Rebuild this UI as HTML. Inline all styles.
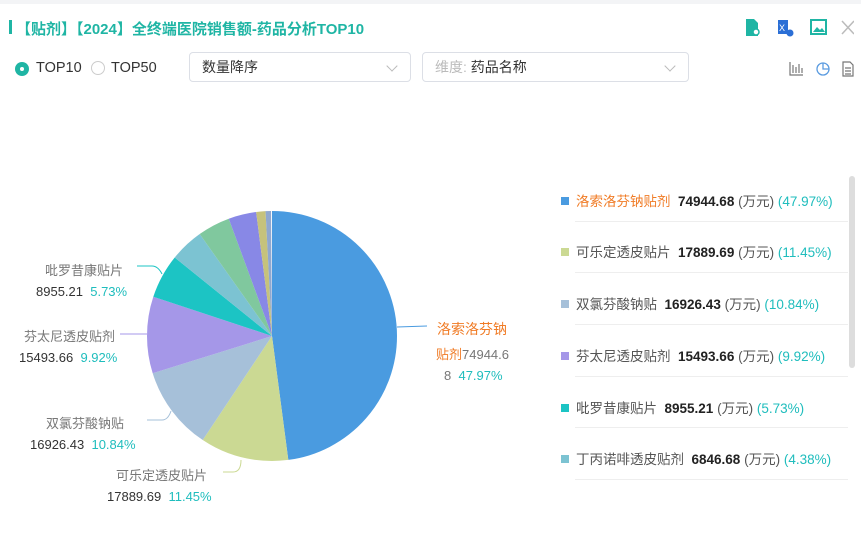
<!DOCTYPE html>
<html><head><meta charset="utf-8"><style>
body{margin:0;width:861px;height:540px;background:#fff;font-family:"Liberation Sans","Noto Sans CJK SC",sans-serif;position:relative;overflow:hidden}
.a{position:absolute;white-space:nowrap}
.topbar{position:absolute;left:0;top:0;width:861px;height:4px;background:#f3f4f6}
.title{left:16px;top:18px;font-size:15px;font-weight:bold;color:#1fb5a4}
.bar{position:absolute;left:9px;top:20px;width:3px;height:14px;background:#1fb5a4}
.sel{position:absolute;top:52px;height:30px;border:1px solid #dcdfe6;border-radius:4px;box-sizing:border-box;font-size:14px;color:#333;line-height:28px;padding-left:12px}
.chev{position:absolute;right:14px;top:9px;width:7px;height:7px;border-right:1px solid #bbb;border-bottom:1px solid #bbb;transform:rotate(45deg)}
.lab{font-size:13px;color:#777}
.num{color:#333}
.pc{color:#1fbdbd}
.lg{position:absolute;left:561px;font-size:13.5px;color:#555}
.lg b{color:#222}
.sq{display:inline-block;width:8px;height:8px;margin-right:7px;vertical-align:1px}
.hr{position:absolute;left:575px;width:273px;height:1px;background:#eee}
</style></head><body>
<div class="topbar"></div>
<div class="bar"></div>
<div class="a title">【贴剂】【2024】全终端医院销售额-药品分析TOP10</div>
<svg class="a" style="left:744px;top:18px" width="110" height="20">
<path d="M2 1h8l4 4v13H2z" fill="#1fb5a4"/><circle cx="12" cy="14" r="3" fill="#fff" stroke="#1fb5a4" stroke-width="1.5"/>
<rect x="34" y="2" width="10" height="14" fill="#2b6fd6"/><text x="35" y="13" font-size="9" fill="#fff" font-family="Liberation Sans">X</text><circle cx="46" cy="15" r="3.5" fill="#2b6fd6"/>
<rect x="67" y="2" width="15" height="14" fill="none" stroke="#1fb5a4" stroke-width="2"/><path d="M69 14l4-5 3 3 2-2 3 4z" fill="#1fb5a4"/>
<path d="M98 3l12 13M110 3L98 16" stroke="#bbb" stroke-width="1.5"/>
</svg>
<div class="a" style="left:15px;top:62px;width:14px;height:14px;border-radius:50%;background:#1fb5a4"></div>
<div class="a" style="left:20px;top:67px;width:4px;height:4px;border-radius:50%;background:#fff"></div>
<div class="a" style="left:36px;top:60px;font-size:14.5px;color:#333">TOP10</div>
<div class="a" style="left:91px;top:61px;width:14px;height:14px;border-radius:50%;border:1px solid #ccc;box-sizing:border-box"></div>
<div class="a" style="left:111px;top:60px;font-size:14.5px;color:#333">TOP50</div>
<div class="sel" style="left:189px;width:222px">数量降序<div class="chev"></div></div>
<div class="sel" style="left:422px;width:267px"><span style="color:#bbb">维度:</span> 药品名称<div class="chev"></div></div>
<svg class="a" style="left:789px;top:61px" width="68" height="16">
<path d="M1 1v13h13M4 12V4M7 12V6M10 12V3M13 12V7" stroke="#777" fill="none" stroke-width="1.2"/>
<circle cx="34" cy="8" r="6" fill="none" stroke="#5a9be0" stroke-width="1.3"/><path d="M34 2v6h6" stroke="#5a9be0" fill="none" stroke-width="1.3"/>
<path d="M54 1h7l3 3v11H54z M56 7h6M56 10h6M56 13h6" stroke="#777" fill="none" stroke-width="1.2"/>
</svg>
<svg class="a" style="left:0;top:0" width="540" height="540">
<g transform="rotate(-90 272 336)" fill="none" stroke-width="125">
<circle cx="272" cy="336" r="62.5" pathLength="100" stroke="#4a9be0" stroke-dasharray="47.97 100" stroke-dashoffset="0"/>
<circle cx="272" cy="336" r="62.5" pathLength="100" stroke="#cbd993" stroke-dasharray="11.45 100" stroke-dashoffset="-47.97"/>
<circle cx="272" cy="336" r="62.5" pathLength="100" stroke="#a6c0d9" stroke-dasharray="10.84 100" stroke-dashoffset="-59.42"/>
<circle cx="272" cy="336" r="62.5" pathLength="100" stroke="#a597e8" stroke-dasharray="9.92 100" stroke-dashoffset="-70.26"/>
<circle cx="272" cy="336" r="62.5" pathLength="100" stroke="#1cc4c4" stroke-dasharray="5.73 100" stroke-dashoffset="-80.18"/>
<circle cx="272" cy="336" r="62.5" pathLength="100" stroke="#7cc3d2" stroke-dasharray="4.38 100" stroke-dashoffset="-85.91"/>
<circle cx="272" cy="336" r="62.5" pathLength="100" stroke="#80c89e" stroke-dasharray="4.2 100" stroke-dashoffset="-90.29"/>
<circle cx="272" cy="336" r="62.5" pathLength="100" stroke="#8888e6" stroke-dasharray="3.6 100" stroke-dashoffset="-94.49"/>
<circle cx="272" cy="336" r="62.5" pathLength="100" stroke="#c6c27c" stroke-dasharray="1.2 100" stroke-dashoffset="-98.09"/>
<circle cx="272" cy="336" r="62.5" pathLength="100" stroke="#8fa8d0" stroke-dasharray="0.71 100" stroke-dashoffset="-99.29"/>
</g>
<path d="M397 327l30-1" stroke="#4a9be0" fill="none"/>
<path d="M137 266h15q6 0 10 8" stroke="#1cc4c4" fill="none"/>
<path d="M120 334h27" stroke="#a597e8" fill="none"/>
<path d="M147 420h15q6 0 9-9" stroke="#a6c0d9" fill="none"/>
<path d="M223 472h10q8 0 8-12" stroke="#cbd993" fill="none"/>
</svg>
<div class="a lab" style="left:45px;top:260px">吡罗昔康贴片</div>
<div class="a lab" style="left:36px;top:284px"><span class="num">8955.21</span>&nbsp; <span class="pc">5.73%</span></div>
<div class="a lab" style="left:24px;top:326px">芬太尼透皮贴剂</div>
<div class="a lab" style="left:19px;top:350px"><span class="num">15493.66</span>&nbsp; <span class="pc">9.92%</span></div>
<div class="a lab" style="left:46px;top:413px">双氯芬酸钠贴</div>
<div class="a lab" style="left:30px;top:437px"><span class="num">16926.43</span>&nbsp; <span class="pc">10.84%</span></div>
<div class="a lab" style="left:116px;top:465px">可乐定透皮贴片</div>
<div class="a lab" style="left:107px;top:489px"><span class="num">17889.69</span>&nbsp; <span class="pc">11.45%</span></div>
<div class="a lab" style="left:437px;top:319px;color:#f07b25;font-size:14px">洛索洛芬钠</div>
<div class="a lab" style="left:436px;top:344px"><span style="color:#f07b25">贴剂</span>74944.6</div>
<div class="a lab" style="left:444px;top:368px">8&nbsp; <span class="pc">47.97%</span></div>
<div class="lg" style="top:190px"><span class="sq" style="background:#4a9be0"></span><span style="color:#f07b25">洛索洛芬钠贴剂</span>&nbsp; <b>74944.68</b> (万元) <span class="pc">(47.97%)</span></div>
<div class="hr" style="top:221px"></div>
<div class="lg" style="top:241px"><span class="sq" style="background:#cbd993"></span>可乐定透皮贴片&nbsp; <b>17889.69</b> (万元) <span class="pc">(11.45%)</span></div>
<div class="hr" style="top:272px"></div>
<div class="lg" style="top:293px"><span class="sq" style="background:#a6c0d9"></span>双氯芬酸钠贴&nbsp; <b>16926.43</b> (万元) <span class="pc">(10.84%)</span></div>
<div class="hr" style="top:324px"></div>
<div class="lg" style="top:345px"><span class="sq" style="background:#a597e8"></span>芬太尼透皮贴剂&nbsp; <b>15493.66</b> (万元) <span class="pc">(9.92%)</span></div>
<div class="hr" style="top:376px"></div>
<div class="lg" style="top:397px"><span class="sq" style="background:#1cc4c4"></span>吡罗昔康贴片&nbsp; <b>8955.21</b> (万元) <span class="pc">(5.73%)</span></div>
<div class="hr" style="top:427px"></div>
<div class="lg" style="top:448px"><span class="sq" style="background:#7cc3d2"></span>丁丙诺啡透皮贴剂&nbsp; <b>6846.68</b> (万元) <span class="pc">(4.38%)</span></div>
<div class="hr" style="top:479px"></div>
<div class="a" style="left:849px;top:176px;width:6px;height:192px;border-radius:3px;background:#ddd"></div>
</body></html>
